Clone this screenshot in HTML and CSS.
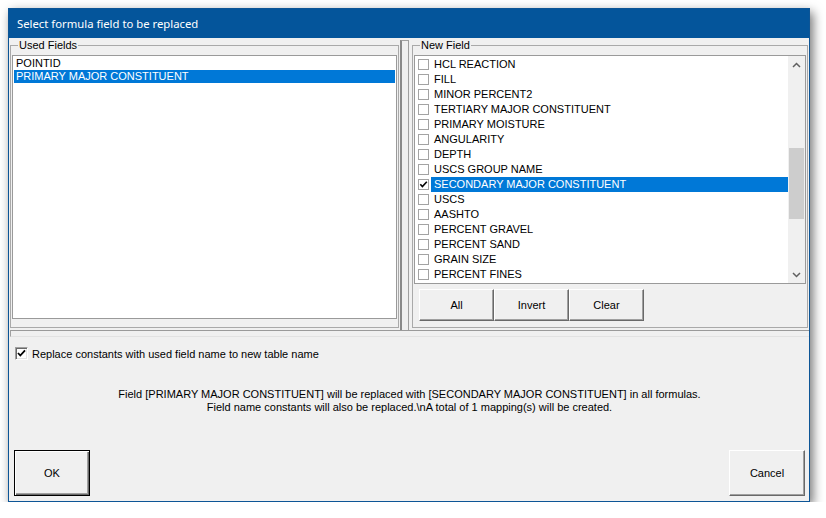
FILE: index.html
```html
<!DOCTYPE html>
<html>
<head>
<meta charset="utf-8">
<title>Select formula field to be replaced</title>
<link rel="stylesheet" href="styles.css">
</head>
<body>
<div class="window">
  <div class="titlebar">Select formula field to be replaced</div>
  <div class="client">
    <div class="top">
      <div class="pane pane-left">
        <fieldset class="group">
          <legend>Used Fields</legend>
          <div class="listbox simple-list">
            <div class="item">POINTID</div>
            <div class="item selected">PRIMARY MAJOR CONSTITUENT</div>
          </div>
        </fieldset>
      </div>
      <div class="vsplit"></div>
      <div class="pane pane-right">
        <fieldset class="group group-new">
          <legend>New Field</legend>
          <div class="listbox checked-list">
            <div class="items">
              <div class="citem"><span class="cb"></span><span class="label">HCL REACTION</span></div>
              <div class="citem"><span class="cb"></span><span class="label">FILL</span></div>
              <div class="citem"><span class="cb"></span><span class="label">MINOR PERCENT2</span></div>
              <div class="citem"><span class="cb"></span><span class="label">TERTIARY MAJOR CONSTITUENT</span></div>
              <div class="citem"><span class="cb"></span><span class="label">PRIMARY MOISTURE</span></div>
              <div class="citem"><span class="cb"></span><span class="label">ANGULARITY</span></div>
              <div class="citem"><span class="cb"></span><span class="label">DEPTH</span></div>
              <div class="citem"><span class="cb"></span><span class="label">USCS GROUP NAME</span></div>
              <div class="citem selected"><span class="cb"><svg width="9" height="9" viewBox="0 0 9 9"><path d="M1.3 4.3 L3.4 6.6 L7.8 1.8" fill="none" stroke="#000" stroke-width="1.6"/></svg></span><span class="label">SECONDARY MAJOR CONSTITUENT</span></div>
              <div class="citem"><span class="cb"></span><span class="label">USCS</span></div>
              <div class="citem"><span class="cb"></span><span class="label">AASHTO</span></div>
              <div class="citem"><span class="cb"></span><span class="label">PERCENT GRAVEL</span></div>
              <div class="citem"><span class="cb"></span><span class="label">PERCENT SAND</span></div>
              <div class="citem"><span class="cb"></span><span class="label">GRAIN SIZE</span></div>
              <div class="citem"><span class="cb"></span><span class="label">PERCENT FINES</span></div>
            </div>
            <div class="scrollbar">
              <div class="arrow"><svg width="9" height="6" viewBox="0 0 9 6"><path d="M1 5 L4.5 1.5 L8 5" fill="none" stroke="#606060" stroke-width="1.5"/></svg></div>
              <div class="track"><div class="thumb"></div></div>
              <div class="arrow"><svg width="9" height="6" viewBox="0 0 9 6"><path d="M1 1 L4.5 4.5 L8 1" fill="none" stroke="#606060" stroke-width="1.5"/></svg></div>
            </div>
          </div>
          <div class="btnrow">
            <button class="btn small">All</button>
            <button class="btn small">Invert</button>
            <button class="btn small">Clear</button>
          </div>
        </fieldset>
      </div>
    </div>
    <div class="hsplit"></div>
    <div class="bottom">
      <div class="check-row">
        <span class="cb3d"><svg width="11" height="11" viewBox="0 0 11 11"><path d="M2 5 L4.3 7.5 L9 2.3" fill="none" stroke="#000" stroke-width="1.8"/></svg></span>
        <span class="check-label">Replace constants with used field name to new table name</span>
      </div>
      <div class="message">Field [PRIMARY MAJOR CONSTITUENT] will be replaced with [SECONDARY MAJOR CONSTITUENT] in all formulas.<br>Field name constants will also be replaced.\nA total of 1 mapping(s) will be created.</div>
      <div class="actions">
        <button class="btn big default">OK</button>
        <button class="btn big">Cancel</button>
      </div>
    </div>
  </div>
</div>
</body>
</html>
```
FILE: styles.css
```css
* { box-sizing: border-box; }
html, body { margin: 0; padding: 0; background: #fff; }
body {
  font-family: "Liberation Sans", Arial, sans-serif;
  font-size: 11px;
  color: #000;
}
.window {
  margin: 8px 0 0 8px;
  width: 802px;
  height: 494px;
  border: 1px solid #0d5596;
  background: #f0f0f0;
  box-shadow: 3px 4px 10px rgba(0, 0, 0, 0.55);
  display: flex;
  flex-direction: column;
}
.titlebar {
  flex: none;
  height: 29px;
  background: #04559b;
  color: #fff;
  font-family: "Noto Sans", sans-serif;
  font-size: 11.3px;
  line-height: 29px;
  padding-left: 8px;
  white-space: nowrap;
}
.client {
  flex: 1;
  display: flex;
  flex-direction: column;
  min-height: 0;
}
.top {
  flex: none;
  height: 292px;
  display: flex;
  padding-top: 1px;
}
.pane-left { width: 390px; padding-left: 1px; }
.pane-right { flex: 1; padding-left: 3px; padding-right: 1px; }
.vsplit {
  width: 9px;
  margin-left: 1px;
  margin-top: 1px;
  height: 291px;
  border-left: 2px solid #8a8a8a;
  border-top: 1px solid #a0a0a0;
  border-right: 1px solid #a0a0a0;
}
.group {
  margin: 0;
  padding: 3px 1px 8px 1px;
  border: 1px solid #a9a9a9;
  min-width: 0;
  height: 289px;
}
.group-new { padding-bottom: 6px; }
.group legend {
  margin-left: 6px;
  padding: 0 1px;
  line-height: 13px;
  height: 13px;
  font-size: 11px;
}
.group-new legend { margin-left: 6px; }
.listbox {
  background: #fff;
  border: 1px solid #9a9a9a;
}
.simple-list {
  height: 264px;
  padding: 1px;
}
.item {
  height: 13px;
  line-height: 13px;
  padding-left: 2px;
  white-space: nowrap;
}
.item.selected, .citem.selected .label {
  background: #0078d7;
  color: #fff;
}
.checked-list {
  height: 229px;
  display: flex;
}
.items {
  flex: 1;
  padding-top: 1px;
  min-width: 0;
}
.citem {
  height: 15px;
  display: flex;
  align-items: center;
}
.cb {
  flex: none;
  width: 11px;
  height: 11px;
  margin-left: 3px;
  margin-right: 2px;
  border: 1px solid #a3a3a3;
  background: #fff;
  display: flex;
  align-items: center;
  justify-content: center;
}
.label {
  flex: 1;
  height: 15px;
  line-height: 15px;
  padding-left: 3px;
  white-space: nowrap;
}
.scrollbar {
  flex: none;
  width: 17px;
  background: #f0f0f0;
  display: flex;
  flex-direction: column;
}
.arrow {
  flex: none;
  height: 17px;
  display: flex;
  align-items: center;
  justify-content: center;
}
.track { flex: 1; }
.thumb {
  margin: 75px 1px 0 1px;
  height: 71px;
  background: #cdcdcd;
}
.btnrow {
  display: flex;
  margin-top: 5px;
  padding-left: 5px;
}
.btn {
  font-family: "Liberation Sans", Arial, sans-serif;
  font-size: 11px;
  color: #000;
  background: #f0f0f0;
  border: 1px solid;
  border-color: #fff #696969 #696969 #fff;
  box-shadow: inset -1px -1px 0 #a0a0a0;
  padding: 0;
  margin: 0;
}
.btn.small { width: 75px; height: 32px; }
.btn.big { width: 76px; height: 46px; }
.btn.default {
  border-color: #000;
  box-shadow: inset 1px 1px 0 #fff, inset -1px -1px 0 #696969, inset -2px -2px 0 #a0a0a0;
}
.hsplit {
  flex: none;
  height: 7px;
  margin-left: 1px;
  border-top: 1px solid #9a9a9a;
  border-left: 1px solid #a0a0a0;
  border-bottom: 1px solid #e2e2e2;
}
.bottom {
  flex: 1;
  display: flex;
  flex-direction: column;
  padding: 10px 4px 5px 5px;
}
.check-row {
  height: 13px;
  display: flex;
  align-items: center;
  padding-left: 1px;
}
.cb3d {
  flex: none;
  width: 13px;
  height: 13px;
  background: #fff;
  border: 1px solid;
  border-color: #a0a0a0 #fff #fff #a0a0a0;
  box-shadow: inset 1px 1px 0 #696969, inset -1px -1px 0 #e3e3e3;
  display: flex;
  align-items: center;
  justify-content: center;
}
.check-label { margin-left: 4px; white-space: nowrap; }
.message {
  margin-top: 28px;
  text-align: center;
  line-height: 13px;
  white-space: nowrap;
}
.actions {
  margin-top: auto;
  display: flex;
  justify-content: space-between;
}
```
